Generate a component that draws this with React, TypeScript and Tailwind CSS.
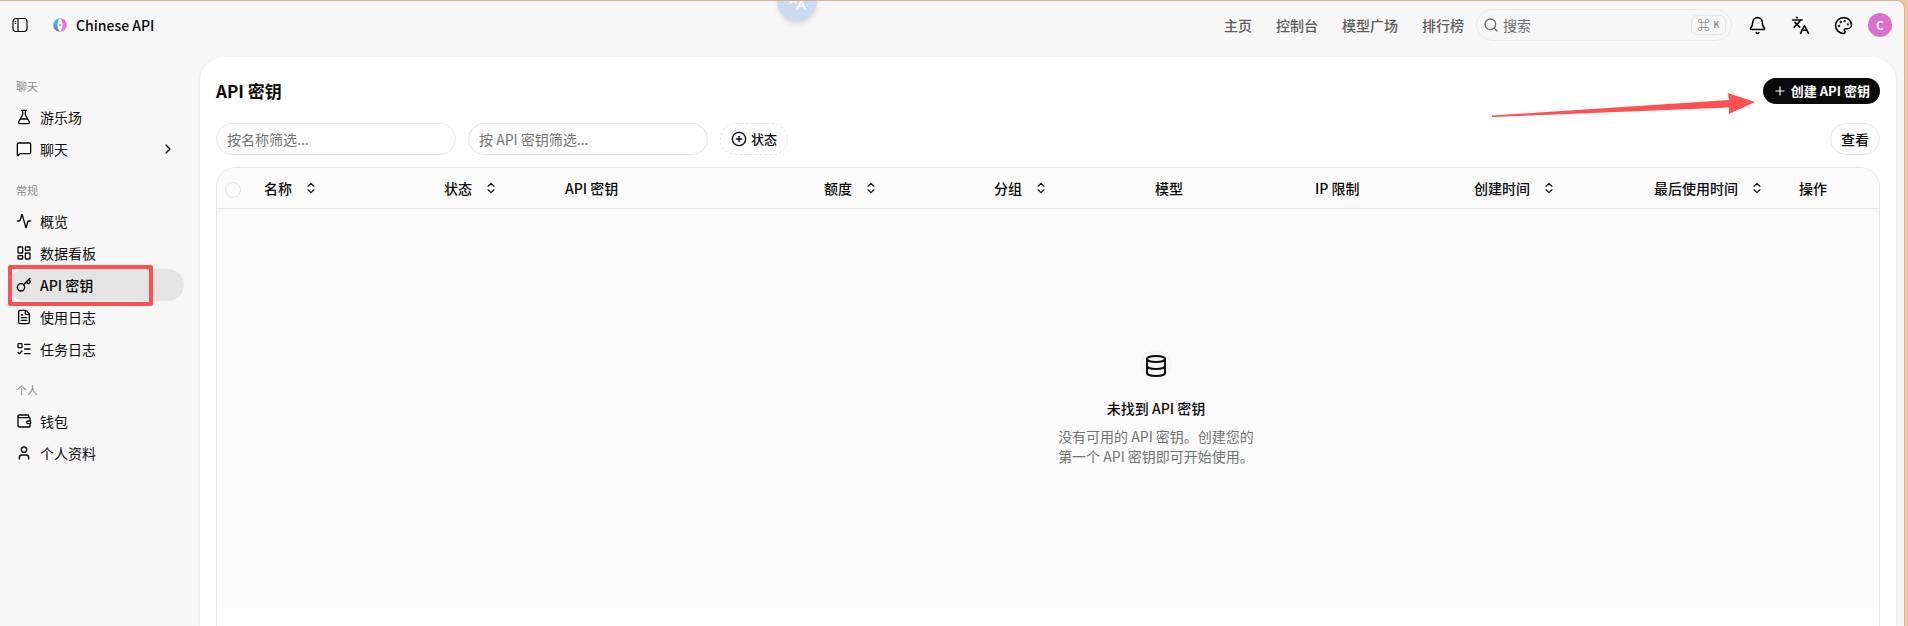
import type { LucideIcon } from 'lucide-react';
import {
  Activity,
  Bell,
  ChevronRight,
  ChevronsUpDown,
  CirclePlus,
  Database,
  FileText,
  FlaskConical,
  Key,
  Languages,
  LayoutDashboard,
  ListTodo,
  MessageSquare,
  Palette,
  Plus,
  Search,
  User,
  Wallet,
} from 'lucide-react';

type NavItem = { label: string; icon: LucideIcon; active?: boolean; expandable?: boolean };

const navGroups: { title: string; items: NavItem[] }[] = [
  {
    title: '聊天',
    items: [
      { label: '游乐场', icon: FlaskConical },
      { label: '聊天', icon: MessageSquare, expandable: true },
    ],
  },
  {
    title: '常规',
    items: [
      { label: '概览', icon: Activity },
      { label: '数据看板', icon: LayoutDashboard },
      { label: 'API 密钥', icon: Key, active: true },
      { label: '使用日志', icon: FileText },
      { label: '任务日志', icon: ListTodo },
    ],
  },
  {
    title: '个人',
    items: [
      { label: '钱包', icon: Wallet },
      { label: '个人资料', icon: User },
    ],
  },
];

const columns = [
  { label: '名称', sortable: true, width: 'w-[180px]' },
  { label: '状态', sortable: true, width: 'w-[121px]' },
  { label: 'API 密钥', sortable: false, width: 'w-[259px]' },
  { label: '额度', sortable: true, width: 'w-[170px]' },
  { label: '分组', sortable: true, width: 'w-[161px]' },
  { label: '模型', sortable: false, width: 'w-[160px]' },
  { label: 'IP 限制', sortable: false, width: 'w-[159px]' },
  { label: '创建时间', sortable: true, width: 'w-[180px]' },
  { label: '最后使用时间', sortable: true, width: 'w-[145px]' },
  { label: '操作', sortable: false, width: '' },
];

function Logo() {
  return (
    <svg width="14" height="14" viewBox="0 0 14 14" fill="none">
      <defs>
        <linearGradient id="logo-left" x1="0" y1="0" x2="0" y2="1">
          <stop offset="0" stopColor="#35d6f5" />
          <stop offset="1" stopColor="#7a5cf5" />
        </linearGradient>
        <linearGradient id="logo-right" x1="0" y1="0" x2="0" y2="1">
          <stop offset="0" stopColor="#ff5fb4" />
          <stop offset="1" stopColor="#f07af0" />
        </linearGradient>
      </defs>
      <path d="M7 .3C3.200.3.3 3.300.3 7s2.700 6.400 6.500 6.700C5.500 12 4.300 10 4.300 7.500S5.300 3 7 .3Z" fill="url(#logo-left)" />
      <path d="M7.200.3c3.800.2 6.500 3.200 6.500 6.700s-2.900 6.700-6.700 6.700C8.700 11.500 9.700 9.500 9.700 7S8.500 2.200 7.200.3Z" fill="url(#logo-right)" />
      <circle cx="7" cy="7" r="1.200" fill="#7cc8f8" />
    </svg>
  );
}

function SidebarIcon() {
  return (
    <svg width="16" height="16" viewBox="0 0 16 16" fill="none" stroke="currentColor" strokeWidth="1.200">
      <rect x="1" y="1.500" width="14" height="13" rx="3" />
      <path d="M6 1.500v13M2.800 4.500h1.400M2.800 6.500h1.400" />
    </svg>
  );
}

function Header() {
  return (
    <header className="flex h-14 items-center px-3 pb-2">
      <button type="button" aria-label="切换侧边栏" className="flex size-4 items-center justify-center">
        <SidebarIcon />
      </button>
      <a href="#" className="ml-[25px] flex items-center gap-[9px] text-sm font-medium">
        <Logo />
        Chinese API
      </a>

      <nav className="ml-auto flex items-center gap-6 text-sm font-medium text-[#5c5c5c]">
        <a href="#">主页</a>
        <a href="#">控制台</a>
        <a href="#">模型广场</a>
        <a href="#">排行榜</a>
      </nav>

      <button
        type="button"
        className="ml-3 flex h-8 w-64 items-center gap-1 rounded-2xl border border-[#e8e8e8] pr-[5px] pl-[6px] text-sm text-[#6b6b6b]"
      >
        <Search size={16} />
        搜索
        <kbd className="ml-auto flex h-5 w-[35px] items-center justify-center gap-1 rounded-md border border-[#e5e5e5] font-[inherit] text-[9px]">
          <span className="text-xs">⌘</span>K
        </kbd>
      </button>

      <div className="ml-4 flex items-center">
        <button type="button" aria-label="通知" className="mr-6">
          <Bell size={19} />
        </button>
        <button type="button" aria-label="语言" className="mr-6">
          <Languages size={19} />
        </button>
        <button type="button" aria-label="主题" className="mr-[15px]">
          <Palette size={19} />
        </button>
        <button type="button" className="size-6 rounded-full bg-[#da70cb] text-xs font-bold text-white">
          C
        </button>
      </div>
    </header>
  );
}

function Sidebar() {
  return (
    <aside className="flex w-[200px] shrink-0 flex-col gap-2.5 pt-3.5 pr-4 pl-2">
      {navGroups.map((group) => (
        <section key={group.title}>
          <h2 className="flex h-[30px] items-center px-2 text-[11px] text-[#8a8a8a]">{group.title}</h2>
          {group.items.map(({ label, icon: Icon, active, expandable }) => (
            <a
              key={label}
              href="#"
              className={`relative flex h-8 items-center gap-2 rounded-2xl px-2 text-sm ${active ? 'bg-[#e4e4e4] font-medium' : ''}`}
            >
              <Icon size={16} />
              {label}
              {expandable && <ChevronRight size={16} className="ml-auto" />}
              {active && <span className="absolute -top-1 left-0 h-[41px] w-[145px] rounded-xs border-4 border-[#fd5151]" />}
            </a>
          ))}
        </section>
      ))}
    </aside>
  );
}

function Toolbar() {
  return (
    <div className="mt-[19px] flex items-center gap-3">
      <input
        type="text"
        aria-label="按名称筛选"
        placeholder="按名称筛选..."
        className="h-8 w-60 rounded-full border border-[#e5e5e5] px-2.5 text-sm placeholder:text-[#737373]"
      />
      <input
        type="text"
        aria-label="按 API 密钥筛选"
        placeholder="按 API 密钥筛选..."
        className="h-8 w-60 rounded-full border border-[#e5e5e5] px-2.5 text-sm placeholder:text-[#737373]"
      />
      <button
        type="button"
        className="flex h-8 items-center gap-1 rounded-2xl border border-dashed border-[#e5e5e5] px-2.5 text-[13px] font-medium"
      >
        <CirclePlus size={16} />
        状态
      </button>
      <button type="button" className="ml-auto h-8 rounded-2xl border border-[#e5e5e5] px-2.5 text-sm font-medium">
        查看
      </button>
    </div>
  );
}

function KeysTable() {
  return (
    <div className="mt-3 grow overflow-hidden rounded-t-[20px] border border-b-0 border-[#e5e5e5]">
      {/* wider than its container, the last column runs out of view */}
      <table className="w-full min-w-[1878px] table-fixed text-left text-sm">
        <thead className="bg-[#fbfbfb]">
          <tr className="h-10 border-b border-[#e5e5e5]">
            <th className="w-[39px] pt-1 pl-2">
              <input
                type="checkbox"
                aria-label="全选"
                className="block size-4 appearance-none rounded-full border border-[#e2e2e2]"
              />
            </th>
            {columns.map((column) => (
              <th key={column.label} className={`px-2 font-medium whitespace-nowrap ${column.width}`}>
                {column.sortable ? (
                  <button type="button" className="flex items-center gap-3">
                    {column.label}
                    <ChevronsUpDown size={14} />
                  </button>
                ) : (
                  column.label
                )}
              </th>
            ))}
          </tr>
        </thead>
        <tbody className="bg-[#fbfbfb]">
          <tr>
            <td colSpan={11} className="h-[400px]">
              <div className="mx-auto flex w-[200px] flex-col items-center">
                <div className="flex size-8 items-center justify-center rounded-full bg-[#f5f5f5]">
                  <Database size={24} />
                </div>
                <h3 className="mt-4 font-medium">未找到 API 密钥</h3>
                <p className="mt-2 text-[#737373]">
                  没有可用的 API 密钥。创建您的
                  <br />
                  第一个 API 密钥即可开始使用。
                </p>
              </div>
            </td>
          </tr>
        </tbody>
      </table>
    </div>
  );
}

export default function App() {
  return (
    <div className="flex min-h-screen bg-[#f0c8a0] pr-[3px] font-['Noto_Sans_CJK_SC',sans-serif] text-[#0a0a0a]">
      <div className="relative flex min-w-0 grow flex-col overflow-hidden rounded-tr-lg border-t border-r border-[#dbb08c] bg-[#f7f7f7]">
        <Header />
        <div className="absolute -top-5 left-[777px] flex size-10 items-end justify-center rounded-full bg-[#c9dcef] pb-2.5 text-white shadow-md">
          <Languages size={20} />
        </div>

        <div className="flex grow">
          <Sidebar />
          <main className="relative mr-2 flex min-w-0 grow flex-col rounded-t-3xl bg-white px-4 pt-[21px] shadow-sm">
            <div className="flex items-center justify-between">
              <h1 className="text-[17px] leading-[26px] font-bold">API 密钥</h1>
              <button
                type="button"
                className="flex h-[26px] items-center gap-1 rounded-full bg-[#0a0a0a] px-2.5 text-[13px] font-bold text-white"
              >
                <Plus size={14} />
                创建 API 密钥
              </button>
            </div>
            <svg width="264" height="24" viewBox="0 0 264 24" className="absolute top-9 right-[140px]">
              <path d="M0 22.500 237 7 236 0l27 9-26 12v-6.500L0 24Z" fill="#fd5151" />
            </svg>
            <Toolbar />
            <KeysTable />
          </main>
        </div>
      </div>
    </div>
  );
}
